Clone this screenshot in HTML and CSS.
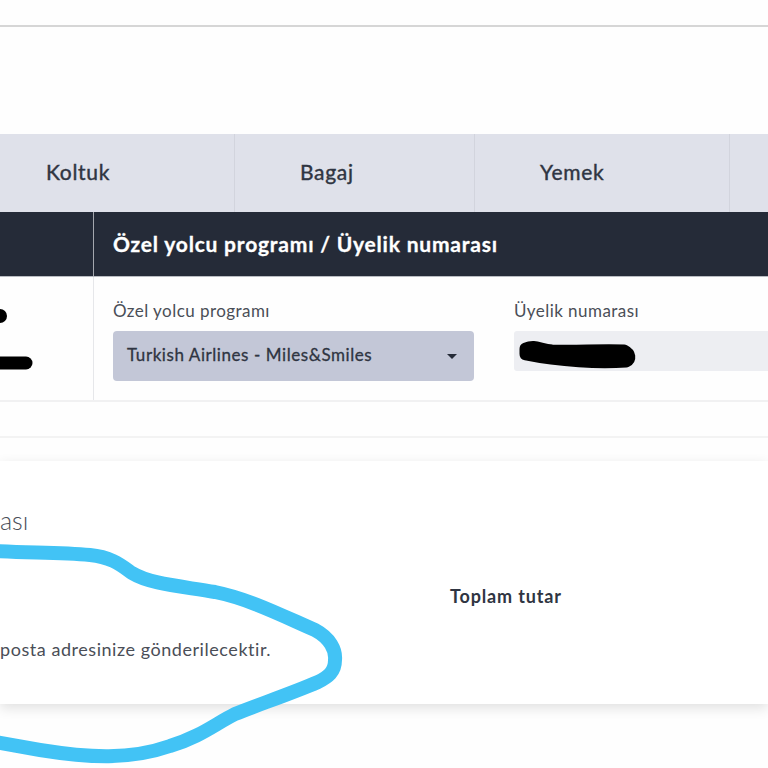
FILE: index.html
```html
<!DOCTYPE html>
<html>
	<head>
		<title>
			Ek hizmetler
		</title>
		<link rel="stylesheet" href="styles.css">
    </head>
    <body>
        <div class="top-line"></div>

        <div class="tabs">
            <div class="tab first-tab">Koltuk</div>
            <div class="tab bagaj-tab">Bagaj</div>
            <div class="tab yemek-tab">Yemek</div>
            <div class="tab last-tab"></div>
        </div>

        <div class="table-head">
            <div class="side-cell head-side"></div>
            <div class="head-title">Özel yolcu programı / Üyelik numarası</div>
        </div>

        <div class="table-row">
            <div class="side-cell"></div>
            <div class="program-cell">
                <div class="field-label">Özel yolcu programı</div>
                <div class="select-box">
                    <span class="select-text">Turkish Airlines - Miles&amp;Smiles</span>
                    <span class="caret"></span>
                </div>
            </div>
            <div class="member-cell">
                <div class="field-label">Üyelik numarası</div>
                <div class="input-box"></div>
            </div>
        </div>

        <div class="spacer"></div>

        <div class="summary">
            <div class="summary-left">
                <div class="summary-title">ası</div>
                <div class="summary-note">posta adresinize gönderilecektir.</div>
            </div>
            <div class="summary-total">Toplam tutar</div>
        </div>

        <!-- marks drawn over the screenshot -->
        <svg class="marks" width="768" height="768" viewBox="0 0 768 768">
            <path class="blue-mark" d="M-5 551 C30 553 60 552 90 555 C112 557 122 566 132 573 C150 584 180 586 215 592 C250 599 285 617 315 630 C330 638 336 650 335 660 C335 672 328 677 318 682 C290 694 260 704 235 714 C215 724 200 737 170 746 C130 760 90 758 40 750 L-5 742"/>
            <path class="black-mark" d="M-5 316 L0 316"/>
            <path class="black-mark thick" d="M-5 363 L26 363"/>
            <path class="black-mark thick" d="M526 349 C535 345 540 350 552 351 C575 352 600 350 624 351 C630 354 630 359 626 361 C600 363 560 361 526 354 Z"/>
        </svg>
    </body>
</html>
```

FILE: styles.css
```css
body {
    margin: 0;
    width: 768px;
    height: 768px;
    overflow: hidden;
    position: relative;
    background: #fefefe;
    color: #2f3542;
    font-family: "Lato", sans-serif;
}
.top-line {
    height: 2px;
    margin-top: 25px;
    background: #d6d6d6;
}
.tabs {
    display: flex;
    height: 78px;
    margin-top: 107px;
    background: #dfe1ea;
}
.tab {
    box-sizing: border-box;
    padding-top: 25px;
    font-size: 21px;
    line-height: 25px;
    letter-spacing: 0.7px;
    -webkit-text-stroke: 0.4px #2f3542;
    border-right: 1px solid #d2d4dd;
}
.first-tab {
    width: 235px;
    padding-left: 46px;
}
.bagaj-tab {
    width: 240px;
    padding-left: 65px;
}
.yemek-tab {
    width: 255px;
    padding-left: 65px;
}
.last-tab {
    flex: 1;
    border-right: none;
}
.table-head {
    display: flex;
    height: 65px;
    background: #252b38;
    border-bottom: 1px solid #b9bcc2;
    box-sizing: border-box;
}
.side-cell {
    box-sizing: border-box;
    width: 94px;
    border-right: 1px solid #e6e7ea;
}
.head-side {
    border-right-color: #a4a7ae;
}
.head-title {
    padding: 19px 0 0 19px;
    color: white;
    font-size: 21px;
    font-weight: 700;
    line-height: 26px;
    letter-spacing: 0.8px;
    -webkit-text-stroke: 0.3px white;
}
.table-row {
    display: flex;
    height: 123px;
    border-bottom: 2px solid #f1f1f2;
}
.program-cell {
    width: 361px;
    margin-left: 19px;
    padding-top: 23px;
}
.member-cell {
    flex: 1;
    margin-left: 40px;
    padding-top: 23px;
}
.field-label {
    height: 31px;
    color: #4a4e57;
    font-size: 17px;
    line-height: 21px;
    letter-spacing: 0.45px;
}
.select-box {
    display: flex;
    justify-content: space-between;
    align-items: center;
    box-sizing: border-box;
    height: 50px;
    padding: 0 17px 4px 14px;
    background: #c3c7d7;
    border-radius: 4px;
    font-size: 17px;
}
.select-text {
    letter-spacing: 0.57px;
    -webkit-text-stroke: 0.3px #2f3542;
}
.caret {
    width: 0;
    height: 0;
    margin-top: 4px;
    border-top: 5px solid #252b38;
    border-left: 5px solid transparent;
    border-right: 5px solid transparent;
}
.input-box {
    height: 40px;
    background: #edeef2;
    border-radius: 3px 0 0 3px;
}
.spacer {
    height: 34px;
    border-bottom: 2px solid #f3f3f3;
}
.summary {
    display: flex;
    height: 243px;
    margin-top: 23px;
    background: white;
    box-shadow: 0 4px 12px rgba(0, 0, 0, 0.12);
}
.summary-left {
    width: 450px;
    flex: none;
}
.summary-title {
    margin-top: 45px;
    color: #4a4e57;
    font-size: 25px;
    font-weight: 300;
    line-height: 29px;
}
.summary-note {
    margin-top: 104px;
    color: #4a4e57;
    font-size: 18px;
    line-height: 21px;
    letter-spacing: 0.55px;
}
.summary-total {
    margin-top: 124px;
    font-size: 18px;
    font-weight: 700;
    line-height: 22px;
    letter-spacing: 0.85px;
}
.marks {
    position: absolute;
    top: 0;
    left: 0;
}
.blue-mark {
    fill: none;
    stroke: #42c3f5;
    stroke-width: 14;
    stroke-linejoin: round;
}
.black-mark {
    fill: black;
    stroke: black;
    stroke-width: 14;
    stroke-linecap: round;
    stroke-linejoin: round;
}
.thick {
    stroke-width: 13;
}
```
